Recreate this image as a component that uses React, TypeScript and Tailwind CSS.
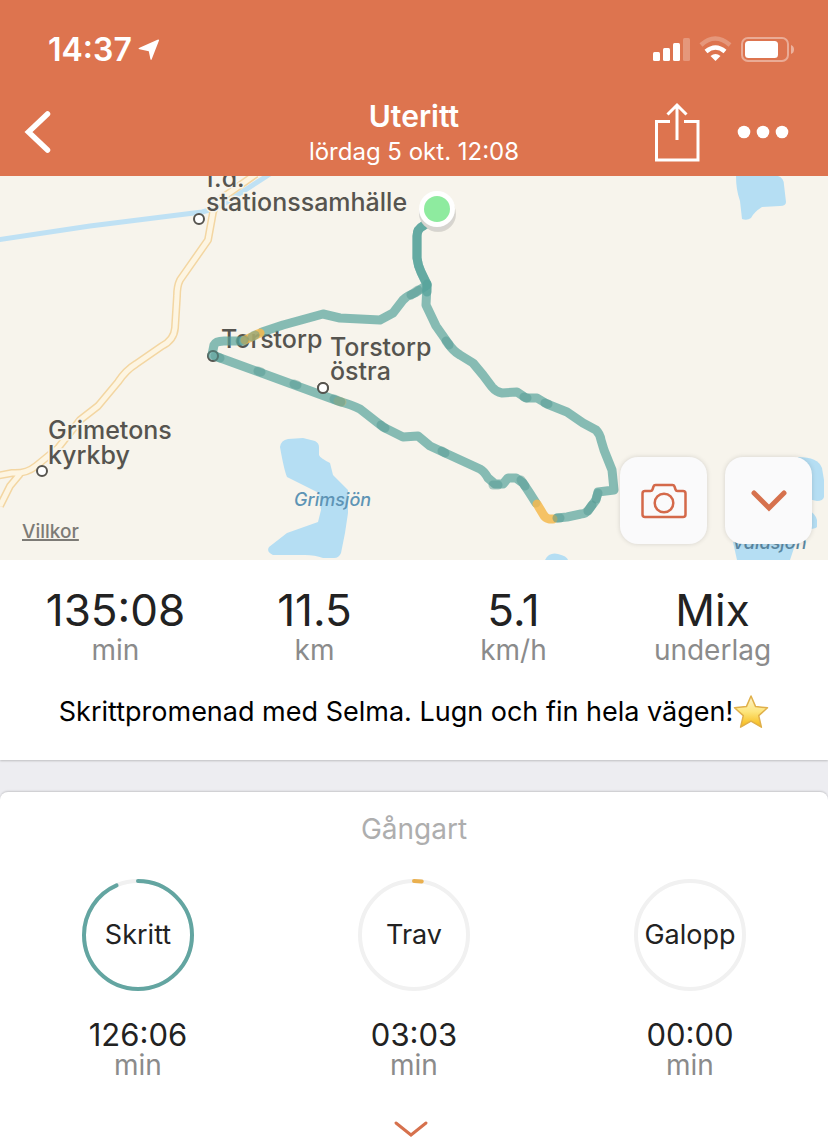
import { ReactNode } from "react";

const STATS = [
  { value: "135:08", label: "min" },
  { value: "11.5", label: "km" },
  { value: "5.1", label: "km/h" },
  { value: "Mix", label: "underlag" },
];

const GAITS = [
  { name: "Skritt", time: "126:06", share: 0.935, color: "#63a5a1" },
  { name: "Trav", time: "03:03", share: 0.023, color: "#eab04f" },
  { name: "Galopp", time: "00:00", share: 0, color: "#d9734f" },
];

const PLACES = [
  { x: 206, y: 187, text: "f.d." },
  { x: 206, y: 211, text: "stationssamhälle" },
  { x: 221, y: 348, text: "Torstorp" },
  { x: 330, y: 356, text: "Torstorp" },
  { x: 330, y: 380, text: "östra" },
  { x: 48, y: 439, text: "Grimetons" },
  { x: 48, y: 464, text: "kyrkby" },
];

const TOWNS = [
  [199, 219],
  [213, 356],
  [323, 388],
  [42, 471],
];

// Short spots where two route segments overlap
const JOINTS = [
  "M418 290L411 295",
  "M446 341L449 345",
  "M524 397L527 398",
  "M545 403L548 404",
  "M598 493L596 499",
  "M592 505L588 511",
  "M557 518L560 518",
  "M521 480L525 486",
  "M493 485L498 485",
  "M442 451L445 453",
  "M381 425L385 428",
  "M334 399L341 402",
  "M294 384L297 385",
  "M258 371L261 372",
  "M215 356L220 358",
  "M240 341L244 340",
];

const ROAD =
  "M256 174L222 198Q213 206 212 218L208 240L180 280Q177 286 177 296L175 328Q174 340 162 346L136 364Q126 370 118 382L98 406L80 420L58 448L36 466Q26 474 12 473L-4 476M20 474L10 486L0 506";

function StatusIcons() {
  return (
    <svg width="144" height="28" viewBox="652 36 144 28" fill="#fff">
      <rect x="653" y="52" width="7" height="9" rx="1.5" />
      <rect x="663" y="48" width="7" height="13" rx="1.5" />
      <rect x="673" y="43" width="7" height="18" rx="1.5" />
      <rect x="683" y="38" width="7" height="23" rx="1.5" opacity="0.25" />
      <path d="M701 45Q715 32 730 45" fill="none" stroke="#fff" strokeWidth="4.5" opacity="0.25" />
      <path d="M706 51.500Q715.500 43.500 725 51.500" fill="none" stroke="#fff" strokeWidth="4.500" />
      <path d="M710.500 56Q715.500 52 720.500 56L715.500 61Z" />
      <rect x="742" y="38" width="46" height="23" rx="6" fill="none" stroke="#fff" strokeWidth="2" opacity="0.4" />
      <rect x="745" y="41" width="33" height="17" rx="3.500" />
      <path d="M791 45Q794 46 794 49.500Q794 53 791 54Z" opacity="0.45" />
    </svg>
  );
}

function Header() {
  return (
    <header className="bg-[#dd744f] text-white">
      <div className="flex h-24 items-center justify-between pt-1 pr-8 pl-12">
        <div className="flex items-center gap-1.5">
          <span className="text-[32px] leading-8 font-semibold">14:37</span>
          <svg width="22" height="22" viewBox="0 0 22 22" fill="#fff">
            <path d="M19.500 0.800Q21.600 0 20.800 2.100L13.800 20Q13 21.800 12.400 20L10.800 12.200L1.500 10.300Q-0.500 9.600 1.500 8.700Z" />
          </svg>
        </div>
        <StatusIcons />
      </div>
      <div className="grid h-20 grid-cols-[1fr_auto_1fr] items-center">
        <button aria-label="Tillbaka" className="w-fit pb-2 pl-6">
          <svg width="28" height="44" viewBox="24 110 28 44" fill="none" stroke="#fff" strokeWidth="5.500" strokeLinecap="round">
            <path d="M47.500 114L28.500 132L47.500 150" strokeLinejoin="miter" />
          </svg>
        </button>
        <div className="pb-1 text-center">
          <h1 className="text-[30px] leading-9 font-semibold">Uteritt</h1>
          <p className="text-[24px] leading-9">lördag 5 okt. 12:08</p>
        </div>
        <div className="flex items-center justify-end gap-9 pr-[38px] pb-2">
          <button aria-label="Dela">
            <svg width="48" height="60" viewBox="653 102 48 60" fill="none" stroke="#fff" strokeWidth="3">
              <path d="M670 121.500H656.500V160H698V121.500H684" />
              <path d="M677 140V105M667.500 114.500L677 105L686.500 114.500" />
            </svg>
          </button>
          <button aria-label="Mer">
            <svg width="53" height="14" viewBox="737 125 53 14" fill="#fff">
              <circle cx="744" cy="132" r="6.300" />
              <circle cx="763" cy="132" r="6.300" />
              <circle cx="782" cy="132" r="6.300" />
            </svg>
          </button>
        </div>
      </div>
    </header>
  );
}

function MapButton({ label, children }: { label: string; children: ReactNode }) {
  return (
    <button
      aria-label={label}
      className="flex h-[87px] w-[87px] items-center justify-center rounded-[18px] bg-[#fafafb] shadow-[0_0_5px_rgba(0,0,0,0.14)]"
    >
      {children}
    </button>
  );
}

function RouteMap() {
  return (
    <section className="relative h-96 overflow-hidden bg-[#f7f4ec]">
      <svg className="h-full w-full" viewBox="0 176 828 384" preserveAspectRatio="xMidYMid slice" fill="none">
        <g fill="#b5def3">
          <path d="M280 447Q281 440 288 439L303 438L315 441Q319 443 319 447V455Q320 458 330 463L333 475L348 490V513L345 533L341 553Q339 558 334 558H323Q315 555 305 555H273Q266 552 269 547L287 533L318 522L321 510L319 493L287 477Q284 470 280 447Z" />
          <path d="M736 176H778Q784 178 784 185L786 202Q786 206 780 206L762 207Q754 212 751 218Q747 221 742 219L740 201Q736 190 736 176Z" />
          <path d="M798 457Q818 457 822 468L824 480V497Q823 501 817 501L808 499Z" />
          <path d="M806 508Q816 514 817 520V527Q815 529 808 529Z" />
          <path d="M733 542H796L790 560H737Z" />
          <path d="M545 560Q549 552 558 554Q567 556 568 560Z" />
        </g>
        <path d="M-4 240L90 226L202 212Q212 210 222 205L270 174" stroke="#bfe1f4" strokeWidth="5" />
        <path d={ROAD} stroke="#f3d6a2" strokeWidth="8" strokeLinejoin="round" />
        <path d={ROAD} stroke="#fdf5e2" strokeWidth="5" strokeLinejoin="round" />

        <g className="text-[25px] font-medium" fill="#56544f" stroke="#f7f4ec" strokeWidth="3" paintOrder="stroke">
          {PLACES.map((place) => (
            <text key={`${place.x}-${place.y}`} x={place.x} y={place.y}>
              {place.text}
            </text>
          ))}
        </g>
        <g className="text-[18px] font-medium italic">
          <text x="294" y="506" fill="#5e94b5">
            Grimsjön
          </text>
          <text x="732" y="549" fill="#5a87a1">
            Valasjön
          </text>
        </g>

        <g fill="#fff" stroke="#56544f" strokeWidth="2">
          {TOWNS.map(([cx, cy]) => (
            <circle key={cx} cx={cx} cy={cy} r="5" />
          ))}
        </g>

        <g stroke="#55a29b" strokeOpacity="0.7" strokeWidth="9" strokeLinejoin="round" strokeLinecap="round">
          <path d="M437 216L423 226Q417 229 417 236V258Q418 266 421 272L427 284V292" />
          <path d="M427 284L426 305L436 326L448 343Q453 351 460 355L473 363L483 375L492 387Q496 392 502 393L517 392L526 398L537 398L547 404L567 412L583 423L596 430Q600 434 601 440L604 450L612 470L614 490L598 492L596 500L590 508Q586 514 581 514L567 517L557 518" />
          <path d="M536 503L529 492L523 483L516 478H508L503 484H495L488 478Q484 471 480 469L443 452L430 446L418 436L403 437L383 427L360 409Q352 405 338 401L212 355L214 345Q216 341 224 341L244 341" />
          <path d="M262 332L283 325L323 314L340 318L380 320L393 313L403 300Q408 295 415 293L427 285L421 272Q418 266 417 258V236Q417 229 423 226" />
        </g>
        <g stroke="#f5b84d" strokeOpacity="0.85" strokeWidth="9" strokeLinejoin="round" strokeLinecap="round">
          <path d="M553 519H549Q545 518 543 514L537 504" />
          <path d="M245 340L260 333" />
          <path d="M338 401L342 402" strokeOpacity="0.3" />
        </g>
        <g stroke="#4f9690" strokeOpacity="0.45" strokeWidth="9" strokeLinecap="round">
          {JOINTS.map((d) => (
            <path key={d} d={d} />
          ))}
          <path d="M252 337L255 335" />
        </g>

        <g stroke="#56544f" strokeWidth="2">
          <circle cx="213" cy="356" r="5" strokeOpacity="0.4" />
          <circle cx="323" cy="388" r="5" fill="#fff" />
        </g>
        <circle cx="438" cy="214" r="18" fill="#000" fillOpacity="0.12" />
        <circle cx="437" cy="213" r="18" fill="#d6d4d0" />
        <circle cx="437" cy="209" r="18" fill="#fff" />
        <circle cx="437" cy="209" r="13" fill="#8eeb9f" />
      </svg>
      <a href="#villkor" className="absolute bottom-4 left-[22px] text-[19px] leading-6 font-medium text-[#7d7b76] underline decoration-2">
        Villkor
      </a>
      <div className="absolute right-4 bottom-4 flex gap-[18px]">
        <MapButton label="Kamera">
          <svg width="46" height="36" viewBox="0 0 46 36" fill="none" stroke="#d4694a" strokeWidth="2.500" strokeLinejoin="round">
            <path d="M4 8H9.500Q11 8 11.500 6.500L12.500 3.500Q13 2 14.500 2H31.500Q33 2 33.500 3.500L34.500 6.500Q35 8 36.500 8H42Q44.500 8 44.500 10.500V31.500Q44.500 34 42 34H4Q1.500 34 1.500 31.500V10.500Q1.500 8 4 8Z" />
            <circle cx="23" cy="20" r="9.300" />
          </svg>
        </MapButton>
        <MapButton label="Dölj kartan">
          <svg width="38" height="24" viewBox="0 0 38 24" fill="none" stroke="#d6714d" strokeWidth="5" strokeLinecap="round">
            <path d="M4 4L19 19L34 4" />
          </svg>
        </MapButton>
      </div>
    </section>
  );
}

function Star() {
  return (
    <svg width="36" height="36" viewBox="0 0 36 36">
      <defs>
        <linearGradient id="star" x1="0" y1="0" x2="0" y2="1">
          <stop offset="0" stopColor="#fdf3cf" />
          <stop offset="0.500" stopColor="#fde67e" />
          <stop offset="1" stopColor="#f6b813" />
        </linearGradient>
      </defs>
      <path
        d="M18 2L22.600 12.600L34.500 13.800L25.700 21.600L28.400 33.200L18 27.200L7.600 33.200L10.300 21.600L1.500 13.800L13.400 12.600Z"
        fill="url(#star)"
        stroke="#e0b04a"
        strokeWidth="1.500"
        strokeLinejoin="round"
      />
    </svg>
  );
}

function Summary() {
  return (
    <section className="bg-white pt-[26px] pb-7 shadow-[0_1px_2px_rgba(0,0,0,0.2)]">
      <dl className="grid grid-cols-4 px-4 text-center">
        {STATS.map((stat) => (
          <div key={stat.label} className="flex flex-col-reverse">
            <dt className="text-[28px] leading-8 text-[#8b8b8b]">{stat.label}</dt>
            <dd className="text-[44px] leading-[48px] text-[#222]">{stat.value}</dd>
          </div>
        ))}
      </dl>
      <p className="mt-[26px] flex items-center justify-center text-[27px] leading-10 whitespace-nowrap text-black">
        Skrittpromenad med Selma. Lugn och fin hela vägen!
        <Star />
      </p>
    </section>
  );
}

function GaitRing({ name, share, color }: { name: string; share: number; color: string }) {
  return (
    <div className="relative flex h-28 w-28 items-center justify-center">
      <svg className="absolute inset-0 -rotate-90" viewBox="0 0 112 112" fill="none" strokeWidth="4">
        <circle cx="56" cy="56" r="54" stroke="#f1f1f1" />
        {share > 0 && (
          <circle
            cx="56"
            cy="56"
            r="54"
            stroke={color}
            strokeLinecap="round"
            pathLength="100"
            strokeDasharray={`${share * 100} 100`}
          />
        )}
      </svg>
      <span className="relative text-[27px] leading-8 text-[#222]">{name}</span>
    </div>
  );
}

function Gaits() {
  return (
    <section className="flex flex-1 flex-col items-center rounded-t-lg bg-white pt-[19px] shadow-[0_-1px_2px_rgba(0,0,0,0.16)]">
      <h2 className="text-[28px] leading-9 text-[#aeaeae]">Gångart</h2>
      <div className="mt-8 grid w-full grid-cols-3">
        {GAITS.map((gait) => (
          <div key={gait.name} className="flex flex-col items-center">
            <GaitRing name={gait.name} share={gait.share} color={gait.color} />
            <span className="mt-7 text-[31px] leading-8 text-[#222]">{gait.time}</span>
            <span className="text-[28px] leading-7 text-[#8b8b8b]">min</span>
          </div>
        ))}
      </div>
      <button aria-label="Visa mer" className="mt-10 pr-1.5">
        <svg width="38" height="20" viewBox="0 0 38 20" fill="none" stroke="#d6714d" strokeWidth="3" strokeLinecap="round">
          <path d="M4 4L19 16L34 4" />
        </svg>
      </button>
    </section>
  );
}

export default function App() {
  return (
    <main className="flex min-h-screen flex-col overflow-hidden bg-[#ededf1] font-['Inter',sans-serif]">
      <Header />
      <RouteMap />
      <div className="flex flex-1 flex-col gap-8">
        <Summary />
        <Gaits />
      </div>
    </main>
  );
}
